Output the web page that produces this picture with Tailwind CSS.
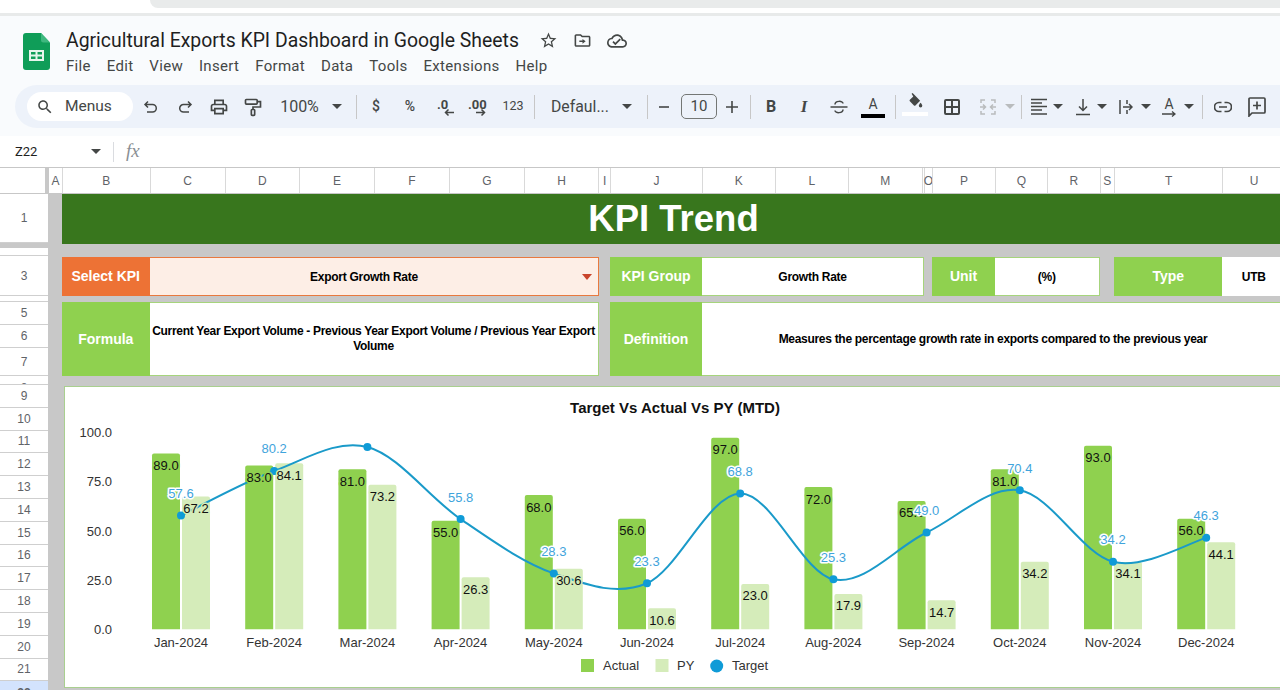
<!DOCTYPE html>
<html lang="en">
<head>
<meta charset="UTF-8">
<script src="https://cdn.jsdelivr.net/npm/@tailwindcss/browser@4"></script>
<title>Agricultural Exports KPI Dashboard in Google Sheets</title>
</head>
<body class="bg-white">
<div class="w-[1280px] h-[690px] overflow-hidden font-['Roboto',sans-serif] text-[#444746]">

  <!--browser edge-->
  <div class="h-[16px] bg-white border-b-[3px] border-[#e8eaea]">
    <div class="h-[8px] ml-[150px] bg-[#e9ebeb] rounded-bl-lg"></div>
  </div>

  <div class="bg-[#f9fbfd] h-[120px]">
    <!--title and menu-->
    <div class="flex h-[69px]">
      <svg class="ml-[23px] mt-[17px]" width="27" height="37" viewBox="0 0 27 37">
        <path d="M3 0h15l9 9.500V34a3 3 0 0 1-3 3H3a3 3 0 0 1-3-3V3a3 3 0 0 1 3-3z" fill="#0f9d58"/>
        <path d="M18 0l9 9.500h-6.500A2.500 2.500 0 0 1 18 7z" fill="#3fb87f"/>
        <path d="M6 17h15v11H6z M8 19v2.500h4.500V19z M14.500 19v2.500H19V19z M8 23.500V26h4.500v-2.500z M14.500 23.500V26H19v-2.500z" fill="#e6f5ec" fill-rule="evenodd"/>
      </svg>
      <div class="ml-[16px] w-[470px]">
        <div class="mt-[12px] h-[26px] leading-[26px] text-[19.400px] text-[#1f1f1f] whitespace-nowrap">Agricultural Exports KPI Dashboard in Google Sheets</div>
        <div class="mt-[2px] flex gap-[16px] h-[20px] leading-[20px] text-[15px] tracking-[0.3px] text-[#444746] whitespace-nowrap">
          <span>File</span><span>Edit</span><span>View</span><span>Insert</span><span>Format</span><span>Data</span><span>Tools</span><span>Extensions</span><span>Help</span>
        </div>
      </div>
      <svg class="ml-[3px] mt-[15px]" width="19" height="19" viewBox="0 0 24 24" fill="#444746"><path d="M22 9.240l-7.190-.620L12 2 9.190 8.630 2 9.240l5.460 4.730L5.820 21 12 17.270 18.180 21l-1.630-7.030L22 9.240zM12 15.400l-3.760 2.270 1-4.280-3.320-2.880 4.380-.380L12 6.100l1.710 4.040 4.380.380-3.320 2.880 1 4.280L12 15.400z"/></svg>
      <svg class="ml-[15px] mt-[15px]" width="19" height="19" viewBox="0 0 24 24" fill="#444746"><path d="M20 6h-8l-2-2H4c-1.100 0-2 .9-2 2v12c0 1.100.9 2 2 2h16c1.100 0 2-.9 2-2V8c0-1.100-.9-2-2-2zm0 12H4V6h5.170l2 2H20v10z"/><path d="M12 10v2H8v2h4v2l4-3z"/></svg>
      <svg class="ml-[15px] mt-[15px]" width="20" height="20" viewBox="0 0 24 24" fill="#444746"><path d="M19.350 10.040C18.670 6.590 15.640 4 12 4 9.110 4 6.600 5.640 5.350 8.040 2.340 8.360 0 10.910 0 14c0 3.310 2.690 6 6 6h13c2.760 0 5-2.240 5-5 0-2.640-2.050-4.780-4.650-4.960zM19 18H6c-2.210 0-4-1.790-4-4 0-2.050 1.530-3.760 3.560-3.970l1.070-.110.5-.95C8.080 7.140 9.940 6 12 6c2.620 0 4.880 1.860 5.390 4.430l.3 1.500 1.530.11c1.560.1 2.780 1.410 2.780 2.960 0 1.650-1.350 3-3 3z"/><path d="M10 17l-3.500-3.500 1.410-1.410L10 14.170l5.180-5.180 1.410 1.410z"/></svg>
    </div>

    <!--toolbar-->
    <div class="ml-[15px] h-[43px] bg-[#edf2fa] rounded-l-[22px] flex items-center pl-[12px] whitespace-nowrap">
      <div class="w-[106px] h-[29px] bg-white rounded-full flex items-center">
        <svg class="ml-[9px]" width="18" height="18" viewBox="0 0 24 24" fill="#444746"><path d="M15.500 14h-.79l-.28-.27C15.410 12.590 16 11.110 16 9.500 16 5.910 13.090 3 9.500 3S3 5.910 3 9.500 5.910 16 9.500 16c1.610 0 3.090-.59 4.230-1.570l.27.28v.79l5 4.990L20.490 19l-4.990-5zm-6 0C7.010 14 5 11.990 5 9.500S7.010 5 9.500 5 14 7.010 14 9.500 11.990 14 9.500 14z"/></svg>
        <span class="ml-[11px] text-[15.500px]">Menus</span>
      </div>
      <svg class="ml-[9px] shrink-0" width="18" height="18" viewBox="0 0 18 18" fill="none" stroke="#444746" stroke-width="1.500"><path d="M6 3.500L3 6.500l3 3M3 6.500h7.500a3.800 3.800 0 0 1 0 7.600H5"/></svg>
      <svg class="ml-[15.500px] shrink-0" width="18" height="18" viewBox="0 0 18 18" fill="none" stroke="#444746" stroke-width="1.500"><path d="M12 3.500l3 3-3 3M15 6.500H7.500a3.800 3.800 0 0 0 0 7.600H13"/></svg>
      <svg class="ml-[15.500px] shrink-0" width="20" height="20" viewBox="0 0 24 24" fill="#444746"><path d="M19 8h-1V3H6v5H5c-1.660 0-3 1.340-3 3v6h4v4h12v-4h4v-6c0-1.660-1.340-3-3-3zM8 5h8v3H8V5zm8 14H8v-4h8v4zm4-4h-2v-2H6v2H4v-4c0-.55.45-1 1-1h14c.55 0 1 .45 1 1v4z"/></svg>
      <svg class="ml-[14px] shrink-0" width="20" height="20" viewBox="0 0 24 24" fill="none" stroke="#444746" stroke-width="2"><rect x="3" y="3" width="14" height="5.500" rx="1"/><path d="M17 5.500h4V12h-9v3"/><rect x="10" y="15" width="4" height="7" rx="1"/></svg>
      <span class="ml-[14.500px] w-[44px] text-center text-[16px]">100%</span>
      <svg class="ml-[10.500px] shrink-0" width="10" height="5" viewBox="0 0 10 5" fill="#444746"><path d="M0 0h10L5 5z"/></svg>
      <div class="ml-[14px] w-px h-[24px] bg-[#c7c7c7] shrink-0"></div>
      <span class="ml-[13px] w-[12px] text-center text-[14px] font-medium">$</span>
      <span class="ml-[21px] w-[14px] text-center text-[14px] font-medium">%</span>
      <div class="ml-[17px] w-[22px] h-[24px] relative shrink-0">
        <span class="absolute left-[3px] top-[1px] text-[13px] leading-[18px] font-bold">.0</span>
        <svg class="absolute left-[10px] top-[13px]" width="10" height="9" viewBox="0 0 10 9" fill="none" stroke="#444746" stroke-width="1.500"><path d="M10 4.500H1M4.500 1.500L1.500 4.500l3 3"/></svg>
      </div>
      <div class="ml-[10px] w-[24px] h-[24px] relative shrink-0">
        <span class="absolute left-[2px] top-[1px] text-[13px] leading-[18px] font-bold">.00</span>
        <svg class="absolute left-[10px] top-[13px]" width="10" height="9" viewBox="0 0 10 9" fill="none" stroke="#444746" stroke-width="1.500"><path d="M0 4.500h9M5.500 1.500l3 3-3 3"/></svg>
      </div>
      <span class="ml-[11px] w-[24px] text-center text-[12.500px]">123</span>
      <div class="ml-[9px] w-px h-[24px] bg-[#c7c7c7] shrink-0"></div>
      <span class="ml-[16px] w-[58px] text-[15.800px]">Defaul...</span>
      <svg class="ml-[13px] shrink-0" width="10" height="5" viewBox="0 0 10 5" fill="#444746"><path d="M0 0h10L5 5z"/></svg>
      <div class="ml-[15px] w-px h-[24px] bg-[#c7c7c7] shrink-0"></div>
      <svg class="ml-[10px] shrink-0" width="12" height="12" viewBox="0 0 12 12" fill="#444746"><path d="M1 5.200h10v1.600H1z"/></svg>
      <div class="ml-[11px] w-[36px] h-[25px] border border-[#747775] rounded-[5px] flex items-center justify-center text-[15px] shrink-0">10</div>
      <svg class="ml-[8px] shrink-0" width="14" height="14" viewBox="0 0 14 14" fill="#444746"><path d="M6.200 1h1.600v5.200H13v1.600H7.800V13H6.200V7.800H1V6.200h5.200z"/></svg>
      <div class="ml-[11px] w-px h-[24px] bg-[#c7c7c7] shrink-0"></div>
      <span class="ml-[13px] w-[14px] text-center text-[16px] font-bold font-['Roboto',sans-serif]">B</span>
      <span class="ml-[19px] w-[14px] text-center text-[17px] font-bold italic font-['Liberation_Serif',serif]">I</span>
      <svg class="ml-[17.500px] shrink-0" width="20" height="20" viewBox="0 0 20 20" fill="none" stroke="#444746" stroke-width="1.500"><path d="M1.500 10h17"/><path d="M6 7.500c0-4 8-4 8-1M14 12.500c0 4-8 4-8 1"/></svg>
      <div class="ml-[12.500px] w-[24px] h-[24px] flex flex-col items-center shrink-0">
        <span class="text-[14px] leading-[18px]">A</span>
        <div class="w-[24px] h-[4px] bg-black mt-[1px]"></div>
      </div>
      <div class="ml-[10px] w-px h-[24px] bg-[#c7c7c7] shrink-0"></div>
      <div class="ml-[6px] w-[26px] h-[28px] flex flex-col items-center shrink-0">
        <svg width="16" height="18" viewBox="0 0 18 21" fill="#444746"><path d="M5 1l1.200-1 2.300 2.300L15 9l-5.500 5.500a1.200 1.200 0 0 1-1.700 0L3 9.700a1.200 1.200 0 0 1 0-1.700l4-4z"/><path d="M15.500 11.500s2 2.200 2 3.500a2 2 0 0 1-4 0c0-1.300 2-3.500 2-3.500z"/></svg>
        <div class="w-[26px] h-[4px] bg-white mt-[1px]"></div>
      </div>
      <svg class="ml-[15px] shrink-0" width="18" height="18" viewBox="0 0 18 18" fill="none" stroke="#444746" stroke-width="2"><rect x="2" y="2" width="14" height="14" rx="1"/><path d="M9 2v14M2 9h14"/></svg>
      <svg class="ml-[18px] shrink-0" width="18" height="18" viewBox="0 0 18 18" fill="none" stroke="#b9bcbd" stroke-width="1.500"><path d="M6 2H2v3M12 2h4v3M6 16H2v-3M12 16h4v-3M1 9h5M4 6.500L6.500 9 4 11.500M17 9h-5M14 6.500L11.500 9l2.500 2.500"/></svg>
      <svg class="ml-[8px] shrink-0" width="10" height="5" viewBox="0 0 10 5" fill="#b9bcbd"><path d="M0 0h10L5 5z"/></svg>
      <div class="ml-[6px] w-px h-[24px] bg-[#c7c7c7] shrink-0"></div>
      <svg class="ml-[9px] shrink-0" width="16" height="18" viewBox="0 0 16 18" fill="none" stroke="#444746" stroke-width="1.500"><path d="M0 1.500h16M0 5h11M0 8.500h16M0 12h11M0 16h16"/></svg>
      <svg class="ml-[6px] shrink-0" width="10" height="5" viewBox="0 0 10 5" fill="#444746"><path d="M0 0h10L5 5z"/></svg>
      <svg class="ml-[13px] shrink-0" width="14" height="18" viewBox="0 0 14 18" fill="none" stroke="#444746" stroke-width="1.500"><path d="M0 16.500h14M7 1v11M3 8.500l4 4 4-4"/></svg>
      <svg class="ml-[7px] shrink-0" width="10" height="5" viewBox="0 0 10 5" fill="#444746"><path d="M0 0h10L5 5z"/></svg>
      <svg class="ml-[12px] shrink-0" width="14" height="16" viewBox="0 0 14 16" fill="none" stroke="#444746" stroke-width="1.500"><path d="M1 1v14M8 1v4M8 11v4M4 8h9M10 5l3 3-3 3"/></svg>
      <svg class="ml-[8px] shrink-0" width="10" height="5" viewBox="0 0 10 5" fill="#444746"><path d="M0 0h10L5 5z"/></svg>
      <div class="ml-[11px] w-[14px] h-[20px] flex flex-col items-center shrink-0">
        <span class="text-[14px] leading-[14px]">A</span>
        <svg width="14" height="6" viewBox="0 0 14 6" fill="none" stroke="#444746" stroke-width="1.300"><path d="M0 3h13M10 .5L13 3l-3 2.500"/></svg>
      </div>
      <svg class="ml-[8px] shrink-0" width="10" height="5" viewBox="0 0 10 5" fill="#444746"><path d="M0 0h10L5 5z"/></svg>
      <div class="ml-[8px] w-px h-[24px] bg-[#c7c7c7] shrink-0"></div>
      <svg class="ml-[11px] shrink-0" width="18" height="12" viewBox="0 0 18 12" fill="none" stroke="#444746" stroke-width="1.700"><path d="M7.500 1.500H5a4.500 4.500 0 0 0 0 9h2.500M10.500 1.500H13a4.500 4.500 0 0 1 0 9h-2.500M5 6h8"/></svg>
      <svg class="ml-[16px] shrink-0" width="18" height="20" viewBox="0 0 18 20" fill="none" stroke="#444746" stroke-width="1.700"><path d="M1 2a1 1 0 0 1 1-1h14a1 1 0 0 1 1 1v13a1 1 0 0 1-1 1H4l-3 3z"/><path d="M9 4.500v8M5 8.500h8"/></svg>
    </div>
  </div>

  <!--name box and formula bar-->
  <div class="h-[32px] bg-white border-b border-[#c7c7c7] flex items-center">
    <span class="ml-[15px] w-[76px] text-[13px] text-[#1f1f1f]">Z22</span>
    <svg width="10" height="5" viewBox="0 0 10 5" fill="#444746"><path d="M0 0h10L5 5z"/></svg>
    <div class="ml-[12px] w-px h-[20px] bg-[#dadce0]"></div>
    <span class="ml-[12px] text-[19px] italic text-[#8a8f94] font-['Liberation_Serif',serif]">fx</span>
  </div>

  <!--column letters-->
  <div class="flex h-[26px] bg-white border-b border-[#c7c7c7] text-[12px] text-[#5f6368] font-['Liberation_Sans',sans-serif]">
    <div class="w-[45px] shrink-0"></div>
    <div class="w-[4px] bg-[#c8c8c8] shrink-0"></div>
    <div class="w-[13px] shrink-0 flex items-center justify-center">A</div>
    <div class="w-[87.500px] shrink-0 flex items-center justify-center border-l border-[#d9d9d9]">B</div>
    <div class="w-[75px] shrink-0 flex items-center justify-center border-l border-[#d9d9d9]">C</div>
    <div class="w-[74.500px] shrink-0 flex items-center justify-center border-l border-[#d9d9d9]">D</div>
    <div class="w-[75px] shrink-0 flex items-center justify-center border-l border-[#d9d9d9]">E</div>
    <div class="w-[75px] shrink-0 flex items-center justify-center border-l border-[#d9d9d9]">F</div>
    <div class="w-[74.700px] shrink-0 flex items-center justify-center border-l border-[#d9d9d9]">G</div>
    <div class="w-[74.700px] shrink-0 flex items-center justify-center border-l border-[#d9d9d9]">H</div>
    <div class="w-[11.600px] shrink-0 flex items-center justify-center border-l border-[#d9d9d9]">I</div>
    <div class="w-[92px] shrink-0 flex items-center justify-center border-l border-[#d9d9d9]">J</div>
    <div class="w-[72.700px] shrink-0 flex items-center justify-center border-l border-[#d9d9d9]">K</div>
    <div class="w-[73.300px] shrink-0 flex items-center justify-center border-l border-[#d9d9d9]">L</div>
    <div class="w-[73.600px] shrink-0 flex items-center justify-center border-l border-[#d9d9d9]">M</div>
    <div class="w-[2.400px] shrink-0 border-l border-[#d9d9d9]"></div>
    <div class="w-[8px] shrink-0 flex items-center justify-center border-l border-[#d9d9d9]">O</div>
    <div class="w-[63px] shrink-0 flex items-center justify-center border-l border-[#d9d9d9]">P</div>
    <div class="w-[52px] shrink-0 flex items-center justify-center border-l border-[#d9d9d9]">Q</div>
    <div class="w-[52.600px] shrink-0 flex items-center justify-center border-l border-[#d9d9d9]">R</div>
    <div class="w-[14.400px] shrink-0 flex items-center justify-center border-l border-[#d9d9d9]">S</div>
    <div class="w-[108.500px] shrink-0 flex items-center justify-center border-l border-[#d9d9d9]">T</div>
    <div class="w-[62.500px] shrink-0 flex items-center justify-center border-l border-[#d9d9d9]">U</div>
  </div>

  <div class="flex">
    <!--row numbers-->
    <div class="w-[48px] shrink-0 bg-white text-[12px] text-[#5f6368] font-['Liberation_Sans',sans-serif]">
      <div class="h-[49px] flex items-center justify-center border-b border-[#cfcfcf]">1</div>
      <div class="h-[5px] bg-[#c8c8c8]"></div>
      <div class="h-[8px] overflow-hidden text-center pt-[5px] leading-[14px] border-b border-[#cfcfcf]">2</div>
      <div class="h-[40px] flex items-center justify-center border-b border-[#cfcfcf]">3</div>
      <div class="h-[6px] overflow-hidden text-center pt-[3px] leading-[14px] border-b border-[#cfcfcf]">4</div>
      <div class="h-[23px] flex items-center justify-center border-b border-[#cfcfcf]">5</div>
      <div class="h-[23px] flex items-center justify-center border-b border-[#cfcfcf]">6</div>
      <div class="h-[28px] flex items-center justify-center border-b border-[#cfcfcf]">7</div>
      <div class="h-[9px] overflow-hidden text-center pt-[5px] leading-[14px] border-b border-[#cfcfcf]">8</div>
      <div class="h-[22.800px] flex items-center justify-center border-b border-[#cfcfcf]">9</div>
      <div class="h-[22.800px] flex items-center justify-center border-b border-[#cfcfcf]">10</div>
      <div class="h-[22.800px] flex items-center justify-center border-b border-[#cfcfcf]">11</div>
      <div class="h-[22.800px] flex items-center justify-center border-b border-[#cfcfcf]">12</div>
      <div class="h-[22.800px] flex items-center justify-center border-b border-[#cfcfcf]">13</div>
      <div class="h-[22.800px] flex items-center justify-center border-b border-[#cfcfcf]">14</div>
      <div class="h-[22.800px] flex items-center justify-center border-b border-[#cfcfcf]">15</div>
      <div class="h-[22.800px] flex items-center justify-center border-b border-[#cfcfcf]">16</div>
      <div class="h-[22.800px] flex items-center justify-center border-b border-[#cfcfcf]">17</div>
      <div class="h-[22.800px] flex items-center justify-center border-b border-[#cfcfcf]">18</div>
      <div class="h-[22.800px] flex items-center justify-center border-b border-[#cfcfcf]">19</div>
      <div class="h-[22.800px] flex items-center justify-center border-b border-[#cfcfcf]">20</div>
      <div class="h-[22.800px] flex items-center justify-center border-b border-[#cfcfcf]">21</div>
      <div class="h-[22.800px] bg-[#d3e3fd] text-center font-bold pt-[5px] leading-[14px]">22</div>
    </div>

    <!--sheet-->
    <div class="w-[1237px] shrink-0 h-[500px] bg-[#c8c8c8] pl-[14px] font-['Liberation_Sans',sans-serif] text-black">
      <div class="h-[50px] bg-[#38761d] flex items-center justify-center text-white text-[36.500px] font-bold">KPI Trend</div>

      <div class="mt-[13px] h-[39px] flex">
        <div class="w-[87.500px] shrink-0 bg-[#ed7235] text-white text-[14px] font-bold flex items-center justify-center">Select KPI</div>
        <div class="w-[449px] shrink-0 bg-[#fdeee6] border border-[#e8793f] border-l-0 text-[12px] tracking-[-0.27px] font-bold flex items-center justify-center pr-[19px] relative">
          Export Growth Rate
          <svg class="absolute right-[6px] top-[16px]" width="10" height="6" viewBox="0 0 10 6" fill="#c9442b"><path d="M0 0h10L5 6z"/></svg>
        </div>
        <div class="ml-[11.500px] w-[92px] shrink-0 bg-[#8fd14f] text-white text-[14px] font-bold flex items-center justify-center">KPI Group</div>
        <div class="w-[222px] shrink-0 bg-white border border-[#a6d47c] border-l-0 text-[12px] tracking-[-0.27px] font-bold flex items-center justify-center">Growth Rate</div>
        <div class="ml-[8px] w-[63px] shrink-0 bg-[#8fd14f] text-white text-[14px] font-bold flex items-center justify-center">Unit</div>
        <div class="w-[104.600px] shrink-0 bg-white border border-[#a6d47c] border-l-0 text-[12px] tracking-[-0.27px] font-bold flex items-center justify-center">(%)</div>
        <div class="ml-[14.400px] w-[108.500px] shrink-0 bg-[#8fd14f] text-white text-[14px] font-bold flex items-center justify-center">Type</div>
        <div class="w-[62.500px] shrink-0 bg-white text-[12px] tracking-[-0.27px] font-bold flex items-center justify-center">UTB</div>
      </div>

      <div class="mt-[6px] h-[74px] flex">
        <div class="w-[87.500px] shrink-0 bg-[#8fd14f] text-white text-[14px] font-bold flex items-center justify-center">Formula</div>
        <div class="w-[449px] shrink-0 bg-white border border-[#a6d47c] border-l-0 text-[12px] tracking-[-0.3px] leading-[15px] font-bold flex items-center justify-center text-center pb-[1px]">Current Year Export Volume - Previous Year Export Volume / Previous Year Export Volume</div>
        <div class="ml-[11.500px] w-[92px] shrink-0 bg-[#8fd14f] text-white text-[14px] font-bold flex items-center justify-center">Definition</div>
        <div class="w-[583px] shrink-0 bg-white border border-[#a6d47c] border-l-0 text-[12px] tracking-[-0.3px] font-bold flex items-center justify-center">Measures the percentage growth rate in exports compared to the previous year</div>
      </div>

      <!--chart-->
      <div class="mt-[10px] ml-[2px] h-[302px] bg-white border border-[#a9cf8f]">
        <svg id="chart" class="block" width="1220" height="300" viewBox="65 387 1220 300" font-family="'Liberation Sans', sans-serif"></svg>
      </div>
    </div>
  </div>
</div>

<script>
  const months = ['Jan-2024','Feb-2024','Mar-2024','Apr-2024','May-2024','Jun-2024','Jul-2024','Aug-2024','Sep-2024','Oct-2024','Nov-2024','Dec-2024'];
  const actual = [89,83,81,55,68,56,97,72,65,81,93,56];
  const py = [67.2,84.1,73.2,26.3,30.6,10.6,23,17.9,14.7,34.2,34.1,44.1];
  const target = [57.6,80.2,92.3,55.8,28.3,23.3,68.8,25.3,49,70.4,34.2,46.3];
  const svg = document.getElementById('chart');
  let out = '';

  const cx = i => 181 + i * 93.2;
  const yOf = v => 629.3 - v * 1.975;

  function label(x, y, txt, fill, halo, size) {
    const h = halo ? `stroke="${halo}" stroke-width="3" paint-order="stroke" stroke-linejoin="round"` : '';
    return `<text x="${x}" y="${y}" text-anchor="middle" dominant-baseline="central" font-size="${size || 13}" fill="${fill}" ${h}>${txt}</text>`;
  }
  function bar(x, w, v, fill) {
    const t = yOf(v);
    return `<path d="M${x} 629.300V${t + 2}q0-2 2-2h${w - 4}q2 0 2 2V629.300z" fill="${fill}"/>`;
  }

  // bars
  months.forEach((m, i) => {
    out += bar(cx(i) - 29, 28, actual[i], '#8fd14f');
    out += bar(cx(i) + 1, 28, py[i], '#d5ecba');
  });

  // target line, catmull-rom
  const pts = target.map((v, i) => [cx(i), yOf(v)]);
  let d = `M${pts[0][0]} ${pts[0][1]}`;
  for (let i = 0; i < pts.length - 1; i++) {
    const p0 = pts[i - 1] || pts[i], p1 = pts[i], p2 = pts[i + 1], p3 = pts[i + 2] || p2;
    d += `C${p1[0] + (p2[0] - p0[0]) / 6} ${p1[1] + (p2[1] - p0[1]) / 6} ${p2[0] - (p3[0] - p1[0]) / 6} ${p2[1] - (p3[1] - p1[1]) / 6} ${p2[0]} ${p2[1]}`;
  }
  out += `<path d="${d}" fill="none" stroke="#1a9ac9" stroke-width="2"/>`;
  pts.forEach(p => { out += `<circle cx="${p[0]}" cy="${p[1]}" r="4" fill="#0f9bd7"/>`; });

  // bar values
  months.forEach((m, i) => {
    out += label(cx(i) - 15, yOf(actual[i]) + 12, actual[i].toFixed(1), '#111', '#8fd14f');
    out += label(cx(i) + 15, yOf(py[i]) + 12, py[i].toFixed(1), '#111', '#d5ecba');
  });

  // target values (march has none in the sheet)
  target.forEach((v, i) => {
    if (i === 2) return;
    out += label(cx(i), yOf(v) - 22, v.toFixed(1), '#3fa4dc', '#fff');
  });

  // axes
  [0, 25, 50, 75, 100].forEach(v => {
    out += `<text x="112" y="${yOf(v) + 0.5}" text-anchor="end" dominant-baseline="central" font-size="13" fill="#333">${v.toFixed(1)}</text>`;
  });
  months.forEach((m, i) => { out += label(cx(i), 642.500, m, '#333'); });

  out += `<text x="675" y="407.500" text-anchor="middle" dominant-baseline="central" font-size="15" font-weight="bold" fill="#111">Target Vs Actual Vs PY (MTD)</text>`;

  // legend
  out += `<rect x="581" y="659" width="13" height="13" fill="#8fd14f"/><text x="603" y="665.500" dominant-baseline="central" font-size="13" fill="#333">Actual</text>`;
  out += `<rect x="655.500" y="659" width="13" height="13" fill="#d5ecba"/><text x="677" y="665.500" dominant-baseline="central" font-size="13" fill="#333">PY</text>`;
  out += `<circle cx="716.700" cy="666" r="6.500" fill="#0f9bd7"/><text x="732" y="665.500" dominant-baseline="central" font-size="13" fill="#333">Target</text>`;

  svg.innerHTML = out;
</script>
</body>
</html>
